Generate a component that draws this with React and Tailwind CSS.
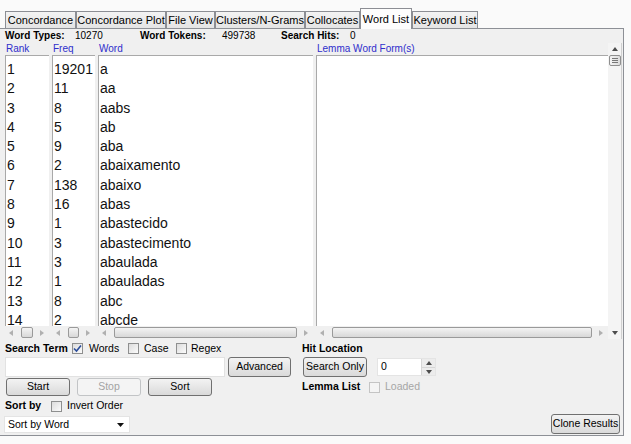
import React from "react";

const tabs = [
  { label: "Concordance", w: "w-[71px]" },
  { label: "Concordance Plot", w: "w-[90px]" },
  { label: "File View", w: "w-[49px]" },
  { label: "Clusters/N-Grams", w: "w-[90px]" },
  { label: "Collocates", w: "w-[55px]" },
  { label: "Word List", w: "w-[52px]", active: true },
  { label: "Keyword List", w: "w-[66px]" },
];

const rows = [
  [1, 19201, "a"],
  [2, 11, "aa"],
  [3, 8, "aabs"],
  [4, 5, "ab"],
  [5, 9, "aba"],
  [6, 2, "abaixamento"],
  [7, 138, "abaixo"],
  [8, 16, "abas"],
  [9, 1, "abastecido"],
  [10, 3, "abastecimento"],
  [11, 3, "abaulada"],
  [12, 1, "abauladas"],
  [13, 8, "abc"],
  [14, 2, "abcde"],
];

const Arrow = ({ dir }) => {
  const pts = {
    left: "5,1 1,4 5,7",
    right: "2,1 6,4 2,7",
    up: "1,6 4,2 7,6",
    down: "1,2 4,6 7,2",
  };
  return (
    <svg width="8" height="8" viewBox="0 0 8 8">
      <polygon points={pts[dir]} fill={dir === "up" || dir === "down" ? "#4d4d4d" : "#b0b0b0"} />
    </svg>
  );
};

const HScroll = () => (
  <div className="h-[13px] flex items-center bg-[#f0f0f0]">
    <div className="w-[14px] flex justify-center">
      <Arrow dir="left" />
    </div>
    <div className="flex-1 px-[2px] h-full flex items-center">
      <div className="flex-1 h-[11px] rounded-[2px] border border-[#9a9a9a] bg-linear-to-b from-[#f4f4f4] to-[#d8d8d8]" />
    </div>
    <div className="w-[14px] flex justify-center">
      <Arrow dir="right" />
    </div>
  </div>
);

const Check = ({ checked, disabled }) => (
  <div
    className={`w-[11px] h-[11px] border flex items-center justify-center ${
      disabled
        ? "border-[#c4c4c4] bg-[#f4f4f4]"
        : "border-[#8e8f8f] bg-linear-to-br from-[#dcdcdc] to-[#fbfbfb]"
    }`}
  >
    {checked && (
      <svg width="9" height="9" viewBox="0 0 9 9">
        <path d="M1 4.5 L3.5 7 L8 1.5" stroke="#2a4c9a" strokeWidth="1.6" fill="none" />
      </svg>
    )}
  </div>
);

const Button = ({ children, className = "", disabled }) => (
  <div
    className={`flex items-center justify-center rounded-[3px] border text-[10.5px] ${
      disabled
        ? "border-[#c2c4c6] bg-[#f4f4f4] text-[#a3a3a3]"
        : "border-[#707070] bg-linear-to-b from-[#f3f3f3] to-[#dadada] text-black"
    } ${className}`}
  >
    {children}
  </div>
);

const Column = ({ title, width, children }) => (
  <div className={`${width} flex flex-col`}>
    <div className="h-[13px] pl-[1px] text-[10px] leading-[13px] text-[#2e2ecc]">{title}</div>
    <div className="h-[271px] bg-white border-t border-l border-[#a9a9a9] overflow-hidden pt-[4px] pl-[1px] text-[14px] text-[#111]">
      {children}
    </div>
    <HScroll />
  </div>
);

export default function App() {
  return (
    <div className="w-[631px] h-[444px] bg-[#fafafa] font-['Liberation_Sans',Arial,sans-serif] text-black overflow-hidden">
      <div className="h-[28px] pl-[5px] flex items-end">
        {tabs.map((t) => (
          <div
            key={t.label}
            className={`${t.w} flex items-center justify-center border-t border-l border-r text-[11px] whitespace-nowrap ${
              t.active
                ? "h-[21px] bg-[#fdfdfd] border-[#8c8e94] -mb-px relative z-10"
                : "h-[17px] border-[#8c8e94] bg-linear-to-b from-[#f3f3f3] to-[#e4e4e4]"
            }`}
          >
            {t.label}
          </div>
        ))}
      </div>

      <div className="w-[624px] h-[408px] bg-[#f0f0f0] border-t border-r border-b border-[#8d9096] flex flex-col">
        <div className="h-[13px] pl-[5px] flex items-center text-[10px] whitespace-nowrap">
          <span className="w-[70px] font-bold">Word Types:</span>
          <span className="w-[65px]">10270</span>
          <span className="w-[82px] font-bold">Word Tokens:</span>
          <span className="w-[59px]">499738</span>
          <span className="w-[69px] font-bold">Search Hits:</span>
          <span>0</span>
        </div>

        <div className="h-[297px] flex">
          <div className="pl-[5px] flex gap-[3px]">
            <Column title="Rank" width="w-[44px]">
              {rows.map((r) => (
                <div key={r[0]} className="h-[19.3px] leading-[19.3px]">{r[0]}</div>
              ))}
            </Column>
            <Column title="Freq" width="w-[43px]">
              {rows.map((r) => (
                <div key={r[0]} className="h-[19.3px] leading-[19.3px]">{r[1]}</div>
              ))}
            </Column>
            <Column title="Word" width="w-[215px]">
              {rows.map((r) => (
                <div key={r[0]} className="h-[19.3px] leading-[19.3px]">{r[2]}</div>
              ))}
            </Column>
            <Column title="Lemma Word Form(s)" width="w-[292px]" />
          </div>
          <div className="w-[14px] mt-[1px] border-r border-[#d0d0d0] bg-[#f4f4f4] flex flex-col items-center">
            <div className="h-[12px] flex items-center">
              <Arrow dir="up" />
            </div>
            <div className="w-[12px] h-[11px] rounded-[2px] border border-[#8f8f8f] bg-linear-to-r from-[#f4f4f4] to-[#dcdcdc] flex flex-col items-center justify-center gap-[1px]">
              <div className="w-[6px] h-px bg-[#777]" />
              <div className="w-[6px] h-px bg-[#777]" />
              <div className="w-[6px] h-px bg-[#777]" />
            </div>
            <div className="flex-1" />
            <div className="h-[13px] flex items-center">
              <Arrow dir="down" />
            </div>
          </div>
        </div>

        <div className="flex-1 flex text-[10.5px]">
          <div className="w-[302px] pl-[5px] flex flex-col">
            <div className="h-[17px] mt-[1px] flex items-center">
              <span className="w-[67px] font-bold whitespace-nowrap">Search Term</span>
              <div className="w-[56px] flex items-center gap-[6px]">
                <Check checked />
                <span>Words</span>
              </div>
              <div className="w-[48px] flex items-center gap-[5px]">
                <Check />
                <span>Case</span>
              </div>
              <div className="flex items-center gap-[4px]">
                <Check />
                <span>Regex</span>
              </div>
            </div>
            <div className="h-[20px] flex items-center">
              <div className="w-[220px] h-[20px] bg-white border border-[#e2e2e2]" />
              <Button className="w-[63px] h-[20px] ml-[3px]">Advanced</Button>
            </div>
            <div className="h-[18px] mt-[1px] pl-[1px] flex gap-[7px]">
              <Button className="w-[64px] h-[18px]">Start</Button>
              <Button className="w-[64px] h-[18px]" disabled>Stop</Button>
              <Button className="w-[64px] h-[18px]">Sort</Button>
            </div>
            <div className="h-[18px] mt-[1px] flex items-center">
              <span className="w-[46px] font-bold">Sort by</span>
              <Check />
              <span className="ml-[5px]">Invert Order</span>
            </div>
            <div className="w-[126px] h-[17px] -ml-[1px] mt-[1px] bg-white border border-[#e4e4e4] flex items-center justify-between pl-[3px] pr-[5px]">
              <span>Sort by Word</span>
              <svg width="7" height="4" viewBox="0 0 7 4">
                <polygon points="0,0 7,0 3.5,4" fill="#111" />
              </svg>
            </div>
          </div>

          <div className="flex-1 flex flex-col pr-[3px]">
            <div className="h-[17px] mt-[1px] flex items-center font-bold">Hit Location</div>
            <div className="h-[20px] flex items-center">
              <Button className="w-[64px] h-[20px] ml-[1px]">Search Only</Button>
              <div className="w-[59px] h-[18px] ml-[10px] bg-white border border-[#e4e4e4] flex items-center justify-between pl-[3px]">
                <span>0</span>
                <div className="w-[14px] h-full flex flex-col border-l border-[#d6d6d6] bg-[#ececec]">
                  <div className="flex-1 flex items-center justify-center border-b border-[#d6d6d6]">
                    <Arrow dir="up" />
                  </div>
                  <div className="flex-1 flex items-center justify-center">
                    <Arrow dir="down" />
                  </div>
                </div>
              </div>
            </div>
            <div className="h-[20px] flex items-center">
              <span className="w-[67px] font-bold">Lemma List</span>
              <Check disabled />
              <span className="ml-[5px] text-[#a6a6a6]">Loaded</span>
            </div>
            <div className="flex-1" />
            <div className="flex justify-end mb-[1px]">
              <Button className="w-[69px] h-[20px]">Clone Results</Button>
            </div>
          </div>
        </div>
      </div>
    </div>
  );
}
